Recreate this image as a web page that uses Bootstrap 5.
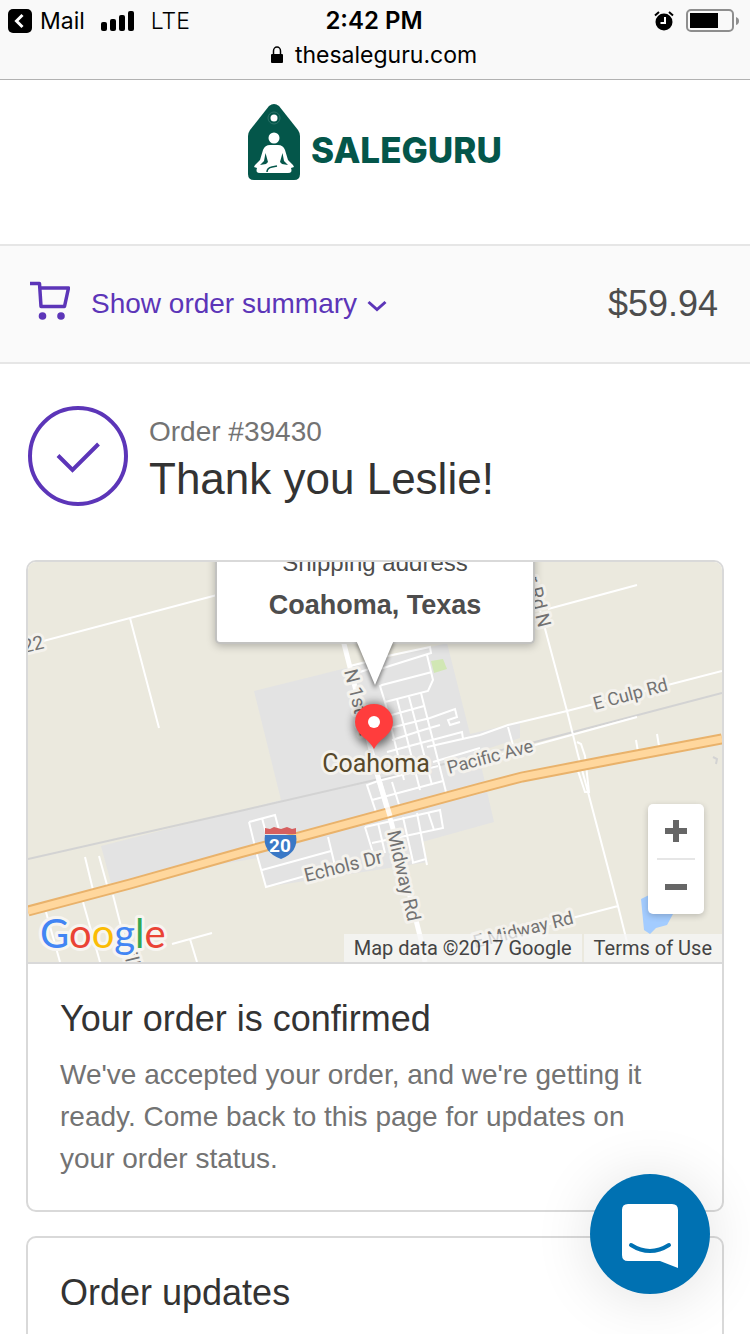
<!DOCTYPE html>
<html lang="en">
<head>
<meta charset="utf-8">
<meta name="viewport" content="width=device-width, initial-scale=1">
<title>Thank you - SaleGuru</title>
<link href="https://cdn.jsdelivr.net/npm/bootstrap@5.3.0/dist/css/bootstrap.min.css" rel="stylesheet">
<style>
  :root { --accent: #5c35b8; --line: #d9d9d9; --ink: #333; --muted: #737373; }
  body { font-family: "Liberation Sans", Arial, sans-serif; font-size: 28px; line-height: 42px; color: var(--ink); background: #fff; }
  svg { display: block; }
  .browser-bar { height: 80px; background: #f9f9f9; border-bottom: 1px solid #b2b2b2; color: #000; font-family: Inter, sans-serif; font-size: 24px; line-height: 34px; padding: 4px 10px 0 8px; }
  .browser-bar .side { flex: 1 1 0; font-size: 23px; }
  .address { font-size: 23px; gap: 12px; }
  .brand-bar { height: 164px; padding-top: 24px; }
  .brand-bar a { gap: 11px; color: #04564a; }
  .brand-word { font-family: Inter, sans-serif; font-weight: 800; font-size: 35px; line-height: 40px; margin-top: 16px; }
  .summary-bar { height: 120px; background: #fafafa; border-top: 2px solid #e6e6e6; border-bottom: 2px solid #e6e6e6; padding: 0 32px 0 30px; }
  .summary-toggle { color: var(--accent); border: 0; background: none; padding: 0; gap: 10px; }
  .summary-toggle span { margin-left: 11px; }
  .total-price { font-size: 36px; color: #4d4d4d; }
  .thanks { padding: 42px 28px 52px; gap: 21px; }
  .order-no { color: var(--muted); line-height: 36px; }
  .thanks h1 { font-size: 44px; line-height: 58px; font-weight: 400; margin: 0; }
  .content { padding: 0 26px; }
  .panel { border: 2px solid var(--line); border-radius: 10px; margin-bottom: 24px; overflow: hidden; background: #fff; }
  .panel-text { padding: 33px 48px 30px 32px; }
  .panel-text h2 { font-size: 36px; line-height: 44px; font-weight: 400; margin: 0 0 13px; }
  .panel-text p { color: var(--muted); margin: 0; }
  .map-box { height: 402px; border-bottom: 2px solid var(--line); background: #ebe9de; }
  .map-box text { font-family: Roboto, sans-serif; font-size: 19px; fill: #737373; stroke: #f4f2ed; stroke-width: 6px; stroke-linejoin: round; paint-order: stroke; }
  .map-box .minor { font-size: 18px; }
  .map-box .town { font-size: 25px; fill: #57492a; }
  .map-box .route { font-weight: 700; fill: #fff; stroke: none; }
  .map-box .glogo { font-family: Lato, sans-serif; font-size: 40px; font-weight: 400; stroke: #f7f5f1; stroke-width: 6px; }
  .callout { top: -31px; width: 320px; height: 113px; padding-top: 12px; border: 2px solid #c2c2c0; border-top: 0; border-radius: 5px; background: #fff; color: #4d4d4d; box-shadow: 0 2px 8px rgba(0,0,0,.25); }
  .callout div { font-size: 24px; line-height: 40px; }
  .callout strong { font-size: 27px; line-height: 44px; }
  .callout svg { top: 100%; }
  .zoomer { right: 18px; bottom: 48px; width: 56px; height: 110px; background: #fff; border-radius: 5px; box-shadow: 0 2px 6px rgba(0,0,0,.2); padding: 0 9px; }
  .zoomer button { flex: 1; border: 0; background: none; padding: 0; }
  .zoomer button + button { border-top: 2px solid #e6e6e6; }
  .credits { right: 0; bottom: 0; font-family: Roboto, sans-serif; font-size: 20px; line-height: 28px; color: #444; gap: 2px; }
  .credits > * { background: rgba(245,245,245,.75); padding: 0 10px; color: #444; }
  .chat { right: 40px; bottom: 40px; width: 120px; height: 120px; border: 0; border-radius: 50%; background: #0071b2; box-shadow: 0 4px 60px rgba(0,0,0,.12); padding: 0; z-index: 5; }
</style>
</head>
<body class="vh-100 d-flex flex-column overflow-hidden">

<header class="browser-bar flex-shrink-0">
  <div class="d-flex align-items-center">
    <div class="side d-flex align-items-center">
      <svg width="24" height="24" viewBox="0 0 24 24"><rect width="24" height="24" rx="5"/><path d="M14.500 6 8.500 12l6 6" fill="none" stroke="#fff" stroke-width="3"/></svg>
      <span class="ms-2">Mail</span>
      <svg class="ms-3" width="34" height="20" viewBox="0 0 34 20"><rect y="11" width="6" height="9" rx="2"/><rect x="9" y="8" width="6" height="12" rx="2"/><rect x="18" y="4" width="6" height="16" rx="2"/><rect x="27" width="6" height="20" rx="2"/></svg>
      <span class="ms-3 fw-light">LTE</span>
    </div>
    <div class="fw-semibold">2:42 PM</div>
    <div class="side d-flex align-items-center justify-content-end gap-2">
      <svg class="me-1" width="20" height="20" viewBox="0 0 20 20"><circle cx="10" cy="11" r="8.500"/><path d="M1 4.500 5 1M15 1l4 3.500" stroke="#000" stroke-width="2"/><path d="M11 6v6H6.500" fill="none" stroke="#fff" stroke-width="2"/></svg>
      <svg width="54" height="24" viewBox="0 0 54 24"><rect x="1" y="1" width="46" height="21" rx="4" fill="none" stroke="#8e8e8e" stroke-width="2"/><rect x="4" y="4" width="28" height="15"/><path d="M50 8q3 1 3 4t-3 4z" fill="#8e8e8e"/></svg>
    </div>
  </div>
  <div class="address d-flex justify-content-center align-items-center">
    <svg width="12" height="18" viewBox="0 0 12 18"><rect y="8" width="12" height="9" rx="1"/><path d="M2.500 9V5a3.500 4 0 0 1 7 0v4" fill="none" stroke="#000" stroke-width="1.500"/></svg>
    <span>thesaleguru.com</span>
  </div>
</header>

<div class="brand-bar flex-shrink-0 d-flex justify-content-center align-items-start">
  <a href="#" class="d-flex align-items-center text-decoration-none">
    <svg width="52" height="76" viewBox="0 0 52 76">
      <path d="M21 2q5-4 10 0l19 24q2 3 2 6v38q0 6-6 6H6q-6 0-6-6V32q0-3 2-6z" fill="#04564a"/>
      <circle cx="26" cy="14" r="3.500" fill="#fff"/><circle cx="26" cy="14" r="6" fill="none" stroke="#2c7268"/>
      <circle cx="26" cy="34" r="5.500" fill="#fff"/>
      <path d="M22 41h8q5 0 7 5l3 10 5 5 1 2-3 1q2 5-3 5H12q-5 0-3-5l-3-1 1-2 5-5 3-10q2-5 7-5z" fill="#fff"/>
      <path d="M17.500 49 16 57l-4 4 6-1 2-2zM34.500 49l1.500 8 4 4-6-1-2-2z" fill="#04564a"/>
      <path d="M19 68q0-4 5-5l5-1" stroke="#04564a" stroke-width="1.500" fill="none"/>
    </svg>
    <span class="brand-word">SALEGURU</span>
  </a>
</div>

<div class="summary-bar flex-shrink-0 d-flex justify-content-between align-items-center">
  <button type="button" class="summary-toggle d-flex align-items-center">
    <svg class="mb-2" width="40" height="40" viewBox="0 0 40 40" fill="none" stroke="#5c35b8"><path d="M0 3.500h9.500l1.500 23h23.500L38.500 8H10" stroke-width="3.500" stroke-linejoin="round"/><circle cx="12.500" cy="36" r="3.800" fill="#5c35b8" stroke="none"/><circle cx="31" cy="36" r="3.800" fill="#5c35b8" stroke="none"/></svg>
    <span>Show order summary</span>
    <svg class="mt-1" width="20" height="12" viewBox="0 0 20 12"><path d="M1.500 2 10 9.500 18.500 2" fill="none" stroke="#5c35b8" stroke-width="3"/></svg>
  </button>
  <span class="total-price">$59.94</span>
</div>

<main class="flex-shrink-0">
  <section class="thanks d-flex align-items-start">
    <svg class="flex-shrink-0" width="100" height="100" viewBox="0 0 100 100" fill="none" stroke="#5c35b8" stroke-width="4"><circle cx="50" cy="50" r="48"/><path d="M30 49.500 44.500 64 70.500 38"/></svg>
    <div class="pt-2">
      <div class="order-no">Order #39430</div>
      <h1>Thank you Leslie!</h1>
    </div>
  </section>

  <div class="content">
    <section class="panel">
      <div class="map-box position-relative overflow-hidden d-flex justify-content-center">
        <svg width="100%" height="400" viewBox="28 562 694 400" preserveAspectRatio="xMidYMid slice" role="img" aria-label="Map of Coahoma, Texas">
          <defs><filter id="soft" x="-50%" y="-50%" width="200%" height="200%"><feGaussianBlur stdDeviation="5"/></filter></defs>
          <path fill="#e3e3e3" d="M254 691 447 643 470 734 520 722V738L478 752 494 822 422 842 428 862 266 887 258 858 111 883 101 846 281 800z"/>
          <path fill="#d1e7b4" d="M431 661 443 659 447 669 434 673z"/>
          <path fill="#a3ccff" d="M641 899 655 892 690 900 673 914 667 925 656 928 650 934 644 930z"/>
          <path fill="none" stroke="#d3d3d3" stroke-width="2" d="M28 859 240 811 440 765 535 742 722 693M713 757l4 2-1 5"/>
          <g fill="none" stroke="#fff" stroke-width="2">
            <path d="M28 645 217 595M130 618 159 728M548 609 637 585M540 610 567 711 578 755 588 792 618 906 629 950M577 742l4 2 4 12 4 36-4 0-8-24M480 735 508 725 567 711 722 671M508 727l5 18M480 760 535 745 637 717M636 740l2 12M657 734l2 12M618 906 480 942"/>
            <path d="M85 857 93 890M99 856 107 885M83 902 100 962M113 895 130 962M46 912 60 962M172 944 212 933M190 939 197 962"/>
            <path d="M378 658 430 647 431 653 380 669M427 655 433 680 428 691 385 702 380 686 382 685 432 672M350 666 366 662M360 672 372 668"/>
            <path d="M385 702 404 780M397 699 420 790M409 697 432 785M421 693 446 792M388 716 424 706M390 728 430 718 455 709 457 717 448 720 450 725 460 722M392 740 423 730 440 725M387 752 432 740 462 732 463 739M427 747 480 735M433 762 480 748"/>
            <path d="M377 815 367 785 378 781 438 766M372 800 443 781M365 827 440 810 443 828 372 843M365 827 373 853M392 782 400 808M378 823 385 853M403 817 413 862M417 813 427 865M428 812 434 830M412 863 426 859M375 814 440 795"/>
            <path d="M249 822 275 815 279 830M249 822 257 855 266 887 330 869M262 818 266 833M262 870 331 851M328 837 335 866"/>
            <path stroke-width="5" d="M343 640 378 777 392 825 421 940 425 962"/>
          </g>
          <g fill="none"><path stroke="#e9b26b" stroke-width="11" d="M28 911 130 884 240 853 480 788 522 777 605 761 722 739"/><path stroke="#ffd79d" stroke-width="7" d="M28 911 130 884 240 853 480 788 522 777 605 761 722 739"/></g>
          <path d="M379 780 390 816" stroke="#fff" stroke-width="5" opacity=".85"/>
          <text transform="translate(24 653) rotate(-13)">22</text>
          <text class="minor" transform="translate(595 710) rotate(-15)">E Culp Rd</text>
          <text class="minor" transform="translate(449 774) rotate(-15)">Pacific Ave</text>
          <text transform="translate(306 882) rotate(-14)">Echols Dr</text>
          <text class="minor" transform="translate(475 948) rotate(-14)">E Midway Rd</text>
          <text transform="translate(387 832) rotate(77)">Midway Rd</text>
          <text transform="translate(344 671) rotate(76)">N 1st St</text>
          <text transform="translate(526 578) rotate(76)">r Rd N</text>
          <text transform="translate(124 954) rotate(76)">ill</text>
          <path d="M265 834V828l5 1 4-2 7 2 6-2 5 2 4-1v6z" fill="#d65f5f"/>
          <path d="M265 835h31q3 17-15 24-19-7-16-24z" fill="#3a78c6"/>
          <text class="route" x="280" y="852" text-anchor="middle">20</text>
          <text class="town" x="376" y="772" text-anchor="middle">Coahoma</text>
          <ellipse cx="374" cy="725" rx="20" ry="22" opacity=".55" filter="url(#soft)"/>
          <path d="M374 749q-4-7-11-12-8-7-8-15a19 18 0 0 1 38 0q0 8-8 15-7 5-11 12z" fill="#ff3d3d"/><circle cx="374" cy="722" r="6" fill="#fff"/>
          <text class="glogo" x="40" y="948"><tspan style="fill:#4285f4">G</tspan><tspan style="fill:#ea4335">o</tspan><tspan style="fill:#fbbc05">o</tspan><tspan style="fill:#4285f4">g</tspan><tspan style="fill:#34a853">l</tspan><tspan style="fill:#ea4335">e</tspan></text>
        </svg>
        <div class="callout position-absolute text-center">
          <div>Shipping address</div>
          <strong class="d-block">Coahoma, Texas</strong>
          <svg class="position-absolute start-50 translate-middle-x" width="50" height="54" viewBox="0 0 50 54"><path d="M6 0 25 47 44 0z" opacity=".5" style="filter:blur(2px)"/><path d="M6-2 25 43 44-2z" fill="#fff"/></svg>
        </div>
        <div class="zoomer position-absolute d-flex flex-column">
          <button type="button" aria-label="Zoom in"><svg class="mx-auto" width="22" height="22" viewBox="0 0 22 22"><path d="M0 11h22M11 0v22" stroke="#666" stroke-width="6"/></svg></button>
          <button type="button" aria-label="Zoom out"><svg class="mx-auto" width="22" height="22" viewBox="0 0 22 22"><path d="M0 11h22" stroke="#666" stroke-width="6"/></svg></button>
        </div>
        <div class="credits position-absolute d-flex"><span>Map data ©2017 Google</span><a href="#" class="text-decoration-none">Terms of Use</a></div>
      </div>
      <div class="panel-text">
        <h2>Your order is confirmed</h2>
        <p>We've accepted your order, and we're getting it ready. Come back to this page for updates on your order status.</p>
      </div>
    </section>
    <section class="panel">
      <div class="panel-text"><h2>Order updates</h2></div>
    </section>
  </div>
</main>

<button type="button" class="chat position-fixed" aria-label="Open chat">
  <svg width="120" height="120" viewBox="0 0 120 120"><path d="M38 30h44q6 0 6 6v58l-18-7H38q-6 0-6-6V36q0-6 6-6z" fill="#fff"/><path d="M41 71q19 12 38 0" fill="none" stroke="#0071b2" stroke-width="4" stroke-linecap="round"/></svg>
</button>

<script src="https://cdn.jsdelivr.net/npm/bootstrap@5.3.0/dist/js/bootstrap.bundle.min.js"></script>
</body>
</html>
